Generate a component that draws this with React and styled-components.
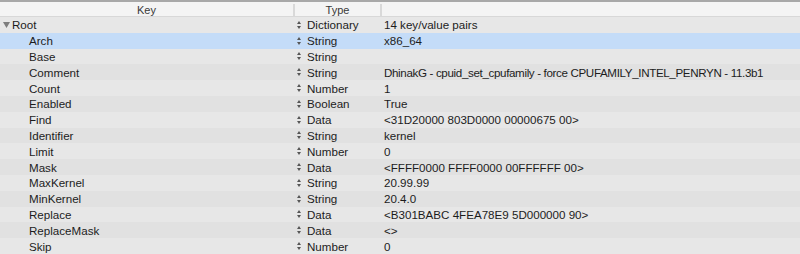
import styled, { createGlobalStyle } from "styled-components";

const GlobalStyle = createGlobalStyle`
  html, body {
    margin: 0;
    padding: 0;
    background: #e6e6e6;
  }
  body {
    font-family: "Liberation Sans", Arial, sans-serif;
    -webkit-font-smoothing: antialiased;
  }
`;

const Table = styled.div`
  width: 800px;
  height: 254px;
  overflow: hidden;
  display: flex;
  flex-direction: column;
`;

const Header = styled.div`
  display: grid;
  grid-template-columns: 293px 87px 1fr;
  height: 14px;
  background: #f4f4f4;
  border-top: 2px solid #a8a8a8;
  border-bottom: 1px solid #d8d8d8;
  box-sizing: content-box;
`;

const HeaderCell = styled.div`
  display: flex;
  align-items: center;
  justify-content: center;
  font-size: 11px;
  color: #3a3a3a;
  border-left: ${({ divider }) => (divider ? "2px solid #d9d9d9" : "none")};
  margin: ${({ divider }) => (divider ? "2px 0" : "0")};
`;

const Row = styled.div`
  display: grid;
  grid-template-columns: 293px 87px 1fr;
  height: 15.8px;
  align-items: center;
  font-size: 11.6px;
  color: #1c1c1c;
  background: ${({ selected, odd }) =>
    selected ? "#c4dcf8" : odd ? "#e1e1e1" : "#e7e7e7"};
`;

const KeyCell = styled.div`
  display: flex;
  align-items: center;
  padding-left: ${({ depth }) => (depth ? "29px" : "3px")};
  white-space: nowrap;
`;

const TypeCell = styled.div`
  display: flex;
  align-items: center;
  gap: 6px;
  padding-left: 4px;
  white-space: nowrap;
`;

const ValueCell = styled.div`
  padding-left: 4px;
  white-space: nowrap;
  letter-spacing: ${({ tight }) => (tight ? "-0.35px" : "0")};
`;

const Disclosure = () => (
  <svg width="7" height="7" viewBox="0 0 7 7" style={{ marginRight: 2 }}>
    <polygon points="0,1 7,1 3.5,7" fill="#7d7d7d" />
  </svg>
);

const Stepper = () => (
  <svg width="4" height="8" viewBox="0 0 4 8">
    <polygon points="2,0 4,3 0,3" fill="#555" />
    <polygon points="0,5 4,5 2,8" fill="#555" />
  </svg>
);

const rows = [
  ["Arch", "String", "x86_64"],
  ["Base", "String", ""],
  ["Comment", "String", "DhinakG - cpuid_set_cpufamily - force CPUFAMILY_INTEL_PENRYN - 11.3b1"],
  ["Count", "Number", "1"],
  ["Enabled", "Boolean", "True"],
  ["Find", "Data", "<31D20000 803D0000 00000675 00>"],
  ["Identifier", "String", "kernel"],
  ["Limit", "Number", "0"],
  ["Mask", "Data", "<FFFF0000 FFFF0000 00FFFFFF 00>"],
  ["MaxKernel", "String", "20.99.99"],
  ["MinKernel", "String", "20.4.0"],
  ["Replace", "Data", "<B301BABC 4FEA78E9 5D000000 90>"],
  ["ReplaceMask", "Data", "<>"],
  ["Skip", "Number", "0"],
];

export default function App() {
  return (
    <>
      <GlobalStyle />
      <Table>
        <Header>
          <HeaderCell>Key</HeaderCell>
          <HeaderCell divider>Type</HeaderCell>
          <HeaderCell divider />
        </Header>
        <Row>
          <KeyCell>
            <Disclosure />
            Root
          </KeyCell>
          <TypeCell>
            <Stepper />
            Dictionary
          </TypeCell>
          <ValueCell>14 key/value pairs</ValueCell>
        </Row>
        {rows.map(([key, type, value], i) => (
          <Row key={key} selected={i === 0} odd={i % 2 === 0}>
            <KeyCell depth={1}>{key}</KeyCell>
            <TypeCell>
              <Stepper />
              {type}
            </TypeCell>
            <ValueCell tight={value.length > 40}>{value}</ValueCell>
          </Row>
        ))}
      </Table>
    </>
  );
}
